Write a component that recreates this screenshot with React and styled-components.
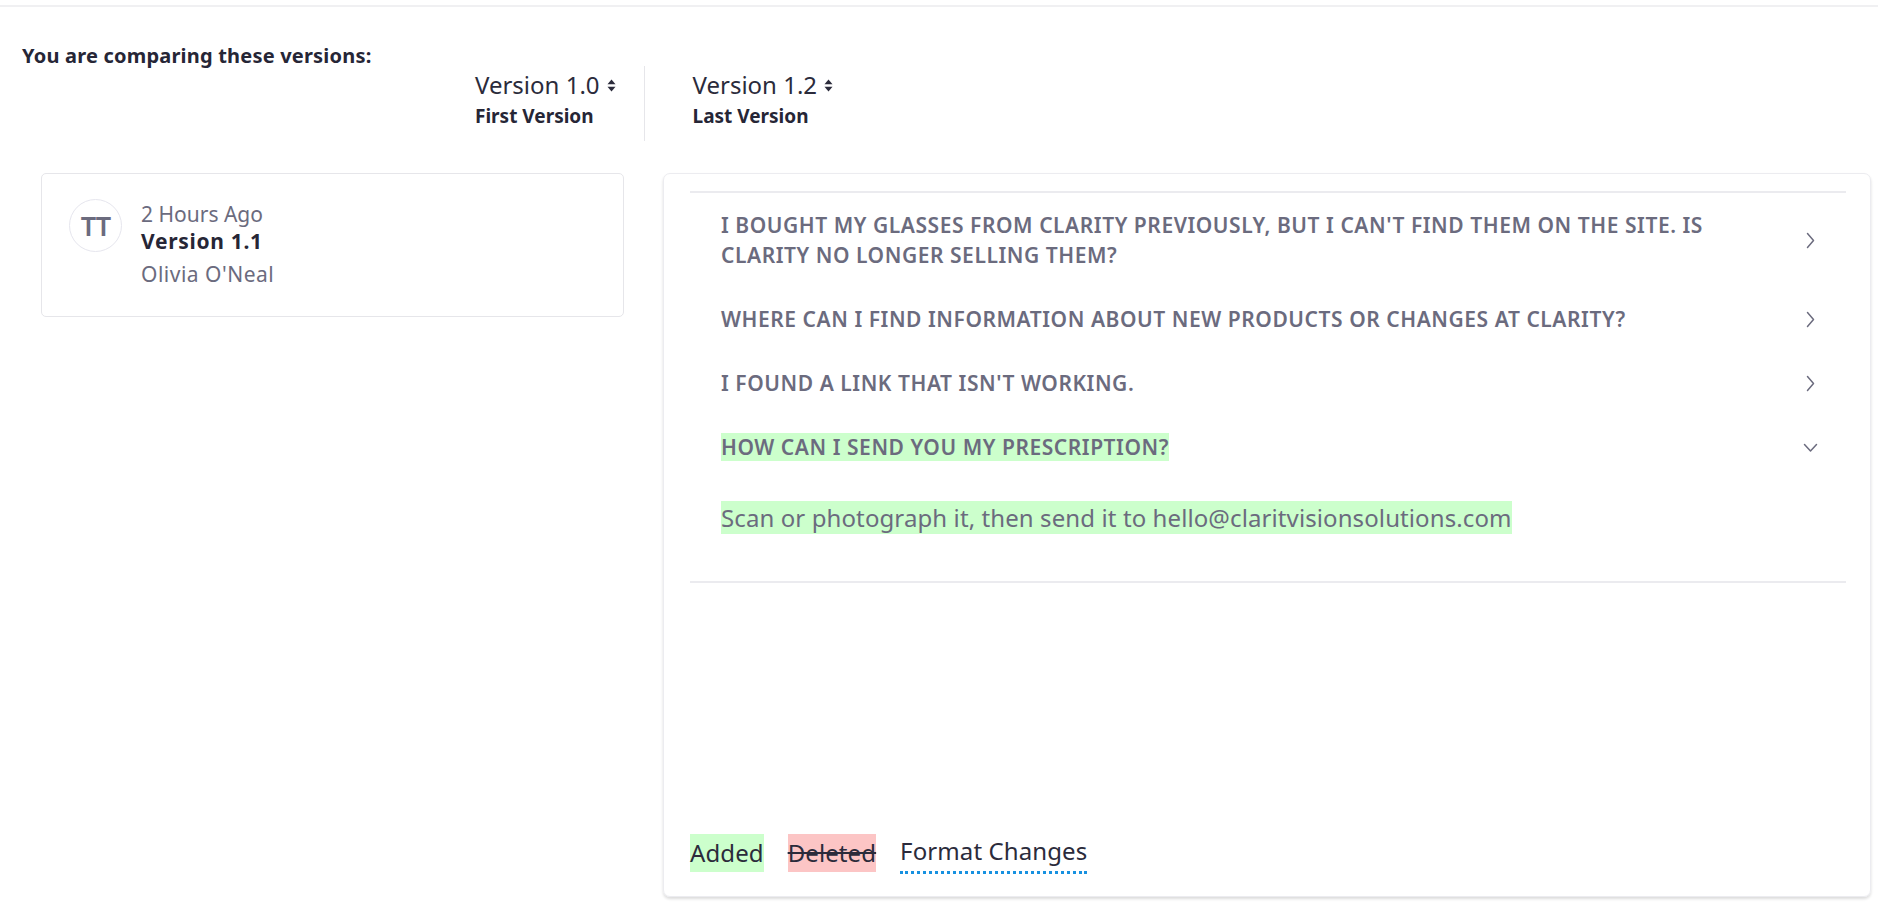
import React from "react";
import styled, { createGlobalStyle } from "styled-components";

const Global = createGlobalStyle`
  html, body { margin: 0; padding: 0; background: #ffffff; }
  body { font-family: "Noto Sans", "Open Sans", sans-serif; color: #262636; }
  * { box-sizing: border-box; }
`;

const Page = styled.div`
  width: 1878px;
  height: 910px;
  display: flex;
  flex-direction: column;
  overflow: hidden;
`;

const TopBar = styled.div`
  height: 7px;
  border-bottom: 2px solid #f0f0f2;
  flex: none;
`;

const Heading = styled.h2`
  margin: 37px 0 0 22px;
  font-size: 20px;
  line-height: 24px;
  font-weight: 700;
  letter-spacing: 0.2px;
  color: #262636;
`;

const VersionBar = styled.div`
  display: flex;
  margin: -2px 0 0 475px;
`;

const VersionItem = styled.div`
  height: 75px;
  display: flex;
  flex-direction: column;
  padding: ${(p) => (p.$first ? "0 28px 0 0" : "0 0 0 48px")};
  border-right: ${(p) => (p.$first ? "1px solid #e6e6ea" : "none")};
`;

const VersionName = styled.div`
  display: flex;
  align-items: center;
  gap: 7px;
  font-size: 24px;
  line-height: 30px;
  margin-top: 4px;
  color: #2b2b3b;
`;

const VersionLabel = styled.div`
  font-size: 19px;
  line-height: 26px;
  margin-top: 3px;
  font-weight: 700;
  color: #262636;
`;

const Main = styled.div`
  display: grid;
  grid-template-columns: 583px 1fr;
  column-gap: 39px;
  padding: 0 7px 0 41px;
  margin-top: 32px;
  align-items: start;
`;

const HistoryCard = styled.div`
  height: 144px;
  border: 1px solid #e6e6ea;
  border-radius: 5px;
  display: flex;
  align-items: flex-start;
  padding: 27px 0 0 27px;
  gap: 19px;
`;

const Avatar = styled.div`
  width: 53px;
  height: 53px;
  margin-top: -2px;
  border-radius: 50%;
  border: 1.5px solid #e6e6ee;
  display: flex;
  align-items: center;
  justify-content: center;
  font-size: 27px;
  font-weight: 600;
  color: #6b6b7e;
  flex: none;
  letter-spacing: -1px;
`;

const Meta = styled.div`
  display: flex;
  flex-direction: column;
`;

const MetaTime = styled.div`
  font-size: 21px;
  line-height: 27px;
  color: #6b6b7e;
`;

const MetaVersion = styled.div`
  font-size: 21px;
  line-height: 27px;
  font-weight: 700;
  letter-spacing: 0.7px;
  color: #262636;
`;

const MetaAuthor = styled.div`
  font-size: 21px;
  line-height: 27px;
  margin-top: 6px;
  letter-spacing: 0.5px;
  color: #6b6b7e;
`;

const ComparePanel = styled.div`
  height: 724px;
  border: 1px solid #ececf0;
  border-radius: 7px;
  box-shadow: 0 2px 3px rgba(0, 0, 0, 0.14);
  padding: 17px 24px 0 26px;
  display: flex;
  flex-direction: column;
`;

const FaqList = styled.div`
  border-top: 2px solid #ebebef;
  border-bottom: 2px solid #ebebef;
`;

const FaqItem = styled.div`
  display: flex;
  align-items: center;
  padding: 17px 28px 17px 31px;
  gap: 40px;
`;

const FaqTitle = styled.div`
  flex: 1;
  font-size: 21px;
  line-height: 30px;
  font-weight: 600;
  letter-spacing: 0.55px;
  text-transform: uppercase;
  color: #6b6b7e;
`;

const Added = styled.span`
  background: #ccffcc;
`;

const Deleted = styled.span`
  background: #fcc5c5;
  text-decoration: line-through;
`;

const Formatted = styled.span`
  border-bottom: 3px dotted #1791e0;
  padding-bottom: 1px;
`;

const Answer = styled.div`
  padding: 23px 31px 47px 31px;
  font-size: 24px;
  line-height: 32px;
  letter-spacing: 0.1px;
  color: #6b6b7e;
`;

const Legend = styled.div`
  margin-top: auto;
  margin-bottom: 22px;
  display: flex;
  align-items: center;
  gap: 24px;
  font-size: 24px;
  line-height: 38px;
  letter-spacing: 0.1px;
  color: #2b2b3b;
`;

const LegendAdded = styled(Added)`
  line-height: 38px;
`;

const LegendDeleted = styled(Deleted)`
  line-height: 38px;
`;

const Chevron = ({ down }) => (
  <svg width="15" height="17" viewBox="0 0 15 17" fill="none" stroke="#6b6b7e" strokeWidth="1.5" strokeLinecap="round" strokeLinejoin="round" style={{ flex: "none" }}>
    {down ? <path d="M1.5 5.5l6 6.5 6-6.5" /> : <path d="M4.5 1.5l6 7-6 7" />}
  </svg>
);

const Sort = () => (
  <svg width="9" height="13" viewBox="0 0 9 13" fill="#2b2b3b">
    <path d="M4.5 0.5L8.5 5.3H0.5Z" />
    <path d="M4.5 12.5L8.5 7.7H0.5Z" />
  </svg>
);

const questions = [
  "I bought my glasses from Clarity previously, but I can't find them on the site. Is Clarity no longer selling them?",
  "Where can I find information about new products or changes at Clarity?",
  "I found a link that isn't working.",
];

export default function App() {
  return (
    <Page>
      <Global />
      <TopBar />
      <Heading>You are comparing these versions:</Heading>
      <VersionBar>
        <VersionItem $first>
          <VersionName>
            Version 1.0 <Sort />
          </VersionName>
          <VersionLabel>First Version</VersionLabel>
        </VersionItem>
        <VersionItem>
          <VersionName>
            Version 1.2 <Sort />
          </VersionName>
          <VersionLabel>Last Version</VersionLabel>
        </VersionItem>
      </VersionBar>
      <Main>
        <HistoryCard>
          <Avatar>TT</Avatar>
          <Meta>
            <MetaTime>2 Hours Ago</MetaTime>
            <MetaVersion>Version 1.1</MetaVersion>
            <MetaAuthor>Olivia O'Neal</MetaAuthor>
          </Meta>
        </HistoryCard>
        <ComparePanel>
          <FaqList>
            {questions.map((q) => (
              <FaqItem key={q}>
                <FaqTitle>{q}</FaqTitle>
                <Chevron />
              </FaqItem>
            ))}
            <FaqItem>
              <FaqTitle>
                <Added>How can I send you my prescription?</Added>
              </FaqTitle>
              <Chevron down />
            </FaqItem>
            <Answer>
              <Added>Scan or photograph it, then send it to hello@claritvisionsolutions.com</Added>
            </Answer>
          </FaqList>
          <Legend>
            <LegendAdded>Added</LegendAdded>
            <LegendDeleted>Deleted</LegendDeleted>
            <Formatted>Format Changes</Formatted>
          </Legend>
        </ComparePanel>
      </Main>
    </Page>
  );
}
